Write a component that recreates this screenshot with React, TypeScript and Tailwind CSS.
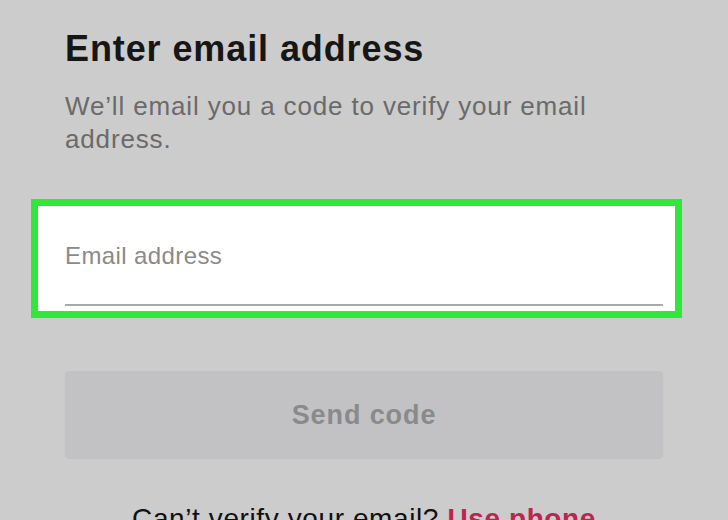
export default function App() {
  return (
    <div
      className="w-[728px] h-[520px] overflow-hidden bg-[#cccccc] px-[65px] pt-[28px]"
      style={{ fontFamily: '"Liberation Sans", Arial, sans-serif' }}
    >
      <h1 className="text-[36px] leading-[42px] font-bold text-[#161616] tracking-[0.9px]">
        Enter email address
      </h1>
      <p className="mt-[20px] text-[26px] leading-[33px] text-[#6a6a6a] tracking-[0.85px]">
        We’ll email you a code to verify your email address.
      </p>

      <div className="mt-[43px] -ml-[34px] -mr-[19px] border-[7px] border-[#30e83a]">
        <div className="bg-white pl-[27px] pr-[12px] pt-[35px] pb-[5px]">
          <div className="text-[24px] leading-[30px] text-[#8a8a8a] tracking-[0.4px] pb-[33px] border-b-2 border-[#a8a8a8]">
            Email address
          </div>
        </div>
      </div>

      <button className="mt-[53px] w-full h-[88px] rounded-[4px] bg-[#c2c2c4] text-[27px] font-bold text-[#8a8a8a] tracking-[0.9px]">
        Send code
      </button>

      <p className="mt-[43px] text-center text-[28px] leading-[34px] text-[#111111] tracking-[0.6px]">
        Can’t verify your email? <span className="font-bold text-[#c0244c]">Use phone</span>
      </p>
    </div>
  );
}
